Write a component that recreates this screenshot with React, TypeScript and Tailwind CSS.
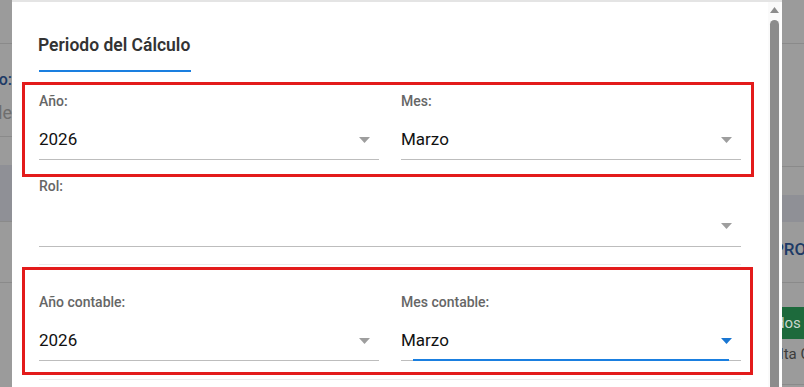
const font = { fontFamily: "Roboto, 'Noto Sans', Arial, sans-serif" };

function Caret({ active = false }: { active?: boolean }) {
  return (
    <svg width="11" height="6" viewBox="0 0 11 6" className="shrink-0">
      <path d="M0 0 L11 0 L5.5 6 Z" fill={active ? "#1976d2" : "#9e9e9e"} />
    </svg>
  );
}

function SelectField({
  label,
  value,
  active = false,
  tall = false,
}: {
  label: string;
  value?: string;
  active?: boolean;
  tall?: boolean;
}) {
  return (
    <div className="flex min-w-0 flex-1 flex-col">
      <label className="h-5 text-[14px] font-medium leading-5 text-[#666]">{label}</label>
      <div
        className={`relative flex items-center border-b border-[#bdbdbd] pr-[9px] pt-[9px] ${tall ? "h-[51px]" : "h-[49px]"}`}
      >
        <span className="flex-1 text-[17px] text-[#111]">{value}</span>
        <Caret active={active} />
        {active && (
          <span className="absolute -bottom-px left-[12px] right-[12px] h-[2px] bg-[#1a7fe0]" />
        )}
      </div>
    </div>
  );
}

function Backdrop() {
  return (
    <div className="flex h-full w-full">
      <div className="flex w-[12px] flex-col overflow-hidden bg-[#9b9b9b]">
        <div className="h-[44px] border-b border-[#8a8a8a]" />
        <div className="flex h-[93px] flex-col items-end overflow-visible border-b border-[#8a8a8a] pt-[26px]">
          <span className="whitespace-nowrap text-[16px] font-medium leading-5 text-[#1d3a66]">o:</span>
          <span className="mt-[13px] whitespace-nowrap text-[18px] leading-5 text-[#6e6e6e]">de</span>
        </div>
        <div className="h-[28px]" />
        <div className="h-[57px] border-b border-[#8a8a8a] bg-[#8f9096]" />
        <div className="h-[61px] border-b border-[#8a8a8a]" />
        <div className="flex-1" />
      </div>
      <div className="flex-1" />
      <div className="flex w-[22px] flex-col overflow-hidden bg-[#9b9b9b]">
        <div className="h-[44px] border-b border-[#8a8a8a]" />
        <div className="h-[123px] border-b border-[#8a8a8a]" />
        <div className="h-[28px]" />
        <div className="h-[27px] bg-[#8f9096]" />
        <div className="flex h-[61px] items-center overflow-hidden border-b border-[#8a8a8a] pb-[4px]">
          <span className="-ml-[9px] whitespace-nowrap text-[17px] font-medium text-[#1d3a66]">PRO</span>
        </div>
        <div className="h-[24px]" />
        <div className="flex h-[32px] items-center overflow-hidden bg-[#1d6a3c]">
          <span className="-ml-[6px] whitespace-nowrap text-[15px] text-[#c9d6cd]">dos a</span>
        </div>
        <div className="flex h-[46px] items-center overflow-hidden border-b border-[#8a8a8a] pb-[14px]">
          <span className="-ml-[2px] whitespace-nowrap text-[15px] text-[#3c3c3c]">lta C</span>
        </div>
      </div>
    </div>
  );
}

function Scrollbar() {
  return (
    <div className="flex w-[12px] flex-col items-center bg-[#fafafa] pt-[5px]">
      <svg width="9" height="6" viewBox="0 0 9 6">
        <path d="M0 6 L4.5 0 L9 6 Z" fill="#8c8c8c" />
      </svg>
      <div className="mt-[7px] w-[9px] flex-1 rounded-t-full bg-[#8c8c8c]" />
    </div>
  );
}

export default function App() {
  return (
    <div className="relative h-[387px] w-[804px] overflow-hidden" style={font}>
      <Backdrop />
      <div className="absolute bottom-0 left-[12px] top-0 flex w-[770px] border-t-2 border-[#e4e4e4] bg-white pr-[2px]">
        <div className="flex-1 pl-[27px] pr-[27px] pt-[29px]">
          <div className="inline-block border-b-2 border-[#1a7fe0] pb-[11px] pr-[1px]">
            <h2 className="-ml-px text-[17.5px] font-semibold leading-[28px] text-[#333]">Periodo del Cálculo</h2>
          </div>

          <div className="relative mt-[19px] flex gap-[22px]">
            <span className="pointer-events-none absolute -bottom-[17px] -left-[17px] -right-[13px] -top-[9px] border-[3px] border-[#e31b1b]" />
            <SelectField label="Año:" value="2026" />
            <SelectField label="Mes:" value="Marzo" />
          </div>

          <div className="mt-[16px] flex">
            <SelectField label="Rol:" tall />
          </div>

          <div className="mt-[17px] h-px bg-[#ececec]" />

          <div className="relative mt-[27px] flex gap-[22px]">
            <span className="pointer-events-none absolute -bottom-[14px] -left-[17px] -right-[12px] -top-[25px] border-[3px] border-[#e31b1b]" />
            <SelectField label="Año contable:" value="2026" />
            <SelectField label="Mes contable:" value="Marzo" active />
          </div>

          <div className="mt-[18px] h-px bg-[#ececec]" />
        </div>
        <Scrollbar />
      </div>
    </div>
  );
}
